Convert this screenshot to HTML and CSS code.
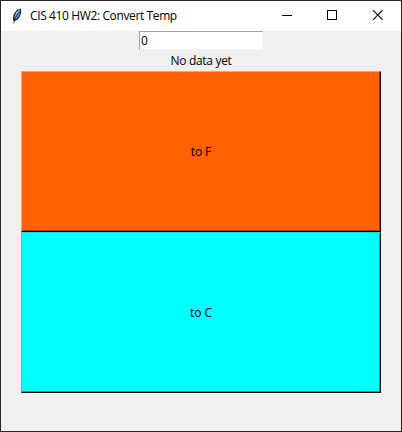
FILE: index.html
```html
<!DOCTYPE html>
<html lang="en">
<head>
<meta charset="utf-8">
<title>CIS 410 HW2: Convert Temp</title>
<link rel="stylesheet" href="styles.css">
</head>
<body>
<div class="window">
  <header class="titlebar">
    <svg class="feather" width="16" height="16" viewBox="0 0 16 16">
      <path d="M4.6 13.4C2.6 8.6 5.8 1.4 11.8 0.4C13.4 4.6 10.4 11.4 6.2 12.8Z" fill="#1f2a36"/>
      <path d="M5.6 10.6C4.8 6.3 7.6 2.6 11 1.4C12 5.2 9.4 9.6 6.4 11Z" fill="#5b93d3"/>
      <path d="M10.4 3.4L6.6 9.4L4.6 15.4" fill="none" stroke="#172330" stroke-width=".8"/>
      <path d="M6.7 6.5L9.2 3.2" stroke="#b7d5f5" stroke-width=".9"/>
    </svg>
    <h1 class="title">CIS 410 HW2: Convert Temp</h1>
    <div class="controls">
      <svg width="45" height="30" viewBox="0 0 45 30" shape-rendering="crispEdges"><path d="M11 14h10v1H11z"/></svg>
      <svg width="45" height="30" viewBox="0 0 45 30" shape-rendering="crispEdges"><path d="M11.5 9.5h9v9h-9z" fill="none" stroke="#000"/></svg>
      <svg width="45" height="30" viewBox="0 0 45 30"><path d="M12 9.2l9.6 9.6M21.6 9.2L12 18.8" fill="none" stroke="#000" stroke-width="1.1"/></svg>
    </div>
  </header>
  <main class="client">
    <input class="entry" type="text" value="0">
    <p class="status">No data yet</p>
    <button class="convert fahrenheit">to F</button>
    <button class="convert celsius">to C</button>
  </main>
</div>
</body>
</html>
```
FILE: styles.css
```css
* {
  box-sizing: border-box;
}

body {
  margin: 0;
  font: 12px/16px "Open Sans", "Noto Sans", sans-serif;
  color: #000;
}

.window {
  width: 402px;
  height: 432px;
  display: flex;
  flex-direction: column;
  border: 1px solid #252527;
  background: #f0f0f0;
}

.titlebar {
  height: 30px;
  display: flex;
  align-items: center;
  padding-left: 8px;
  background: #fff;
}

.feather {
  flex: none;
}

.title {
  margin: 0 0 0 5px;
  font-size: 12px;
  font-weight: 400;
  letter-spacing: -0.38px;
  white-space: nowrap;
}

.controls {
  display: flex;
  margin-left: auto;
  margin-right: -5px;
}

.client {
  flex: 1;
  display: flex;
  flex-direction: column;
  align-items: center;
}

.entry {
  width: 124px;
  height: 19px;
  margin: 0;
  padding: 0 1px;
  border: 1px solid;
  border-color: #a0a0a0 #f4f4f4 #f4f4f4 #a0a0a0;
  border-radius: 0;
  outline: 0;
  background: #fff;
  color: #000;
  font: inherit;
}

.status {
  height: 21px;
  margin: 0;
  line-height: 22px;
  letter-spacing: -0.3px;
}

.convert {
  width: 360px;
  height: 161px;
  padding: 0;
  border: 1px solid;
  border-radius: 0;
  color: #000;
  font: inherit;
  letter-spacing: -0.1px;
}

.fahrenheit {
  background: #ff6103;
  border-color: #ffa068 #000 #000 #ffa068;
  box-shadow: inset -1px -1px #a63f02;
}

.celsius {
  background: #00ffff;
  border-color: #00e6e6 #000 #000 #00d5d5;
  box-shadow: inset -1px -1px #00a6a6;
}
```
